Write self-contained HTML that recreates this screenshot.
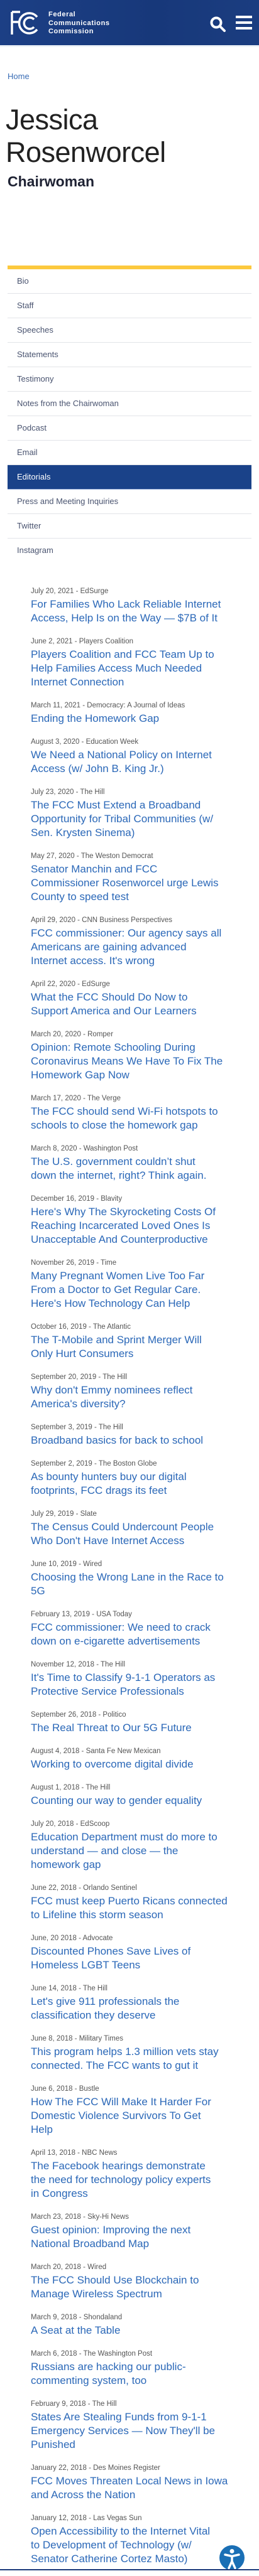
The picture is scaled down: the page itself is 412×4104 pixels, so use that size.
<!DOCTYPE html>
<html><head><meta charset="utf-8">
<style>
*{margin:0;padding:0;box-sizing:border-box}
body{width:412px;height:4095px;overflow:hidden;background:#fff;font-family:"Liberation Sans",Arial,sans-serif;position:relative}
.hdr{position:absolute;left:0;top:0;width:412px;height:72px;background:linear-gradient(90deg,#1c3f85,#17387a 60%,#1b3d80)}
.hl{position:absolute;left:0;top:72px;width:412px;height:3px;background:#eef3f8}
.org{position:absolute;left:77px;top:17px;color:#fff;font-size:11px;line-height:13.5px;font-weight:bold;letter-spacing:.6px}
.home{position:absolute;left:12px;top:114px;font-size:13px;color:#3a6db5}
.name{position:absolute;left:9px;top:165px;font-size:45px;line-height:52px;color:#222;font-weight:300;letter-spacing:-.5px}
.title{position:absolute;left:12px;top:276px;font-size:23px;font-weight:bold;color:#1e2233}
.ybar{position:absolute;left:12px;top:423px;width:388px;height:6px;background:#fcc93e}
.nav{position:absolute;left:12px;top:429px;width:388px}
.nav div{height:39px;line-height:38px;padding-left:15px;font-size:13px;color:#4a5470;border-bottom:1.5px solid #e2e4e8}
.nav div.act{background:#1a4289;color:#fff;border-bottom-color:#9fb4dd}
.nav div:last-child{border-bottom:none}
.list{position:absolute;left:49px;top:932px;width:350px}
.it{margin-bottom:16px}
.d{font-size:11.5px;line-height:20px;color:#555;white-space:nowrap}
.t{font-size:17px;line-height:22px;color:#2b68b8;white-space:nowrap}
.bl{position:absolute;left:0;top:4093px;width:412px;height:2px;background:#1a3a7a}
.acc{position:absolute;left:349px;top:4055px;width:40px;height:40px;border-radius:50%;background:#1a6fb5}
</style></head><body>
<div class="hdr">
<svg style="position:absolute;left:17px;top:17px" width="46" height="40" viewBox="0 0 46 40">
<path d="M2 2h13M2 2v36M2 18h10" stroke="#fff" stroke-width="3.5" fill="none"/>
<path d="M42 10A16 16 0 1 0 42 30" stroke="#fff" stroke-width="3.5" fill="none"/>
<path d="M37 14A9 9 0 1 0 37 26" stroke="#fff" stroke-width="3.5" fill="none"/>
</svg>
<div class="org">Federal<br>Communications<br>Commission</div>
<svg style="position:absolute;left:334px;top:26px" width="26" height="26" viewBox="0 0 26 26">
<circle cx="10" cy="10" r="7.5" stroke="#fff" stroke-width="4" fill="none"/>
<path d="M16 16l7 7" stroke="#fff" stroke-width="4" stroke-linecap="round"/>
</svg>
<svg style="position:absolute;left:375px;top:24px" width="26" height="24" viewBox="0 0 26 24">
<rect x="0" y="1" width="26" height="4" fill="#fff"/><rect x="0" y="10" width="26" height="4" fill="#fff"/><rect x="0" y="19" width="26" height="4" fill="#fff"/>
</svg>
</div>
<div class="hl"></div>
<div class="home">Home</div>
<div class="name">Jessica<br>Rosenworcel</div>
<div class="title">Chairwoman</div>
<div class="ybar"></div>
<div class="nav">
<div>Bio</div><div>Staff</div><div>Speeches</div><div>Statements</div><div>Testimony</div><div>Notes from the Chairwoman</div><div>Podcast</div><div>Email</div><div class="act">Editorials</div><div>Press and Meeting Inquiries</div><div>Twitter</div><div>Instagram</div>
</div>
<div class="list">
<div class="it"><div class="d">July 20, 2021 - EdSurge</div><div class="t">For Families Who Lack Reliable Internet<br>Access, Help Is on the Way — $7B of It</div></div>
<div class="it"><div class="d">June 2, 2021 - Players Coalition</div><div class="t">Players Coalition and FCC Team Up to<br>Help Families Access Much Needed<br>Internet Connection</div></div>
<div class="it"><div class="d">March 11, 2021 - Democracy: A Journal of Ideas</div><div class="t">Ending the Homework Gap</div></div>
<div class="it"><div class="d">August 3, 2020 - Education Week</div><div class="t">We Need a National Policy on Internet<br>Access (w/ John B. King Jr.)</div></div>
<div class="it"><div class="d">July 23, 2020 - The Hill</div><div class="t">The FCC Must Extend a Broadband<br>Opportunity for Tribal Communities (w/<br>Sen. Krysten Sinema)</div></div>
<div class="it"><div class="d">May 27, 2020 - The Weston Democrat</div><div class="t">Senator Manchin and FCC<br>Commissioner Rosenworcel urge Lewis<br>County to speed test</div></div>
<div class="it"><div class="d">April 29, 2020 - CNN Business Perspectives</div><div class="t">FCC commissioner: Our agency says all<br>Americans are gaining advanced<br>Internet access. It's wrong</div></div>
<div class="it"><div class="d">April 22, 2020 - EdSurge</div><div class="t">What the FCC Should Do Now to<br>Support America and Our Learners</div></div>
<div class="it"><div class="d">March 20, 2020 - Romper</div><div class="t">Opinion: Remote Schooling During<br>Coronavirus Means We Have To Fix The<br>Homework Gap Now</div></div>
<div class="it"><div class="d">March 17, 2020 - The Verge</div><div class="t">The FCC should send Wi-Fi hotspots to<br>schools to close the homework gap</div></div>
<div class="it"><div class="d">March 8, 2020 - Washington Post</div><div class="t">The U.S. government couldn’t shut<br>down the internet, right? Think again.</div></div>
<div class="it"><div class="d">December 16, 2019 - Blavity</div><div class="t">Here's Why The Skyrocketing Costs Of<br>Reaching Incarcerated Loved Ones Is<br>Unacceptable And Counterproductive</div></div>
<div class="it"><div class="d">November 26, 2019 - Time</div><div class="t">Many Pregnant Women Live Too Far<br>From a Doctor to Get Regular Care.<br>Here's How Technology Can Help</div></div>
<div class="it"><div class="d">October 16, 2019 - The Atlantic</div><div class="t">The T-Mobile and Sprint Merger Will<br>Only Hurt Consumers</div></div>
<div class="it"><div class="d">September 20, 2019 - The Hill</div><div class="t">Why don't Emmy nominees reflect<br>America's diversity?</div></div>
<div class="it"><div class="d">September 3, 2019 - The Hill</div><div class="t">Broadband basics for back to school</div></div>
<div class="it"><div class="d">September 2, 2019 - The Boston Globe</div><div class="t">As bounty hunters buy our digital<br>footprints, FCC drags its feet</div></div>
<div class="it"><div class="d">July 29, 2019 - Slate</div><div class="t">The Census Could Undercount People<br>Who Don't Have Internet Access</div></div>
<div class="it"><div class="d">June 10, 2019 - Wired</div><div class="t">Choosing the Wrong Lane in the Race to<br>5G</div></div>
<div class="it"><div class="d">February 13, 2019 - USA Today</div><div class="t">FCC commissioner: We need to crack<br>down on e-cigarette advertisements</div></div>
<div class="it"><div class="d">November 12, 2018 - The Hill</div><div class="t">It's Time to Classify 9-1-1 Operators as<br>Protective Service Professionals</div></div>
<div class="it"><div class="d">September 26, 2018 - Politico</div><div class="t">The Real Threat to Our 5G Future</div></div>
<div class="it"><div class="d">August 4, 2018 - Santa Fe New Mexican</div><div class="t">Working to overcome digital divide</div></div>
<div class="it"><div class="d">August 1, 2018 - The Hill</div><div class="t">Counting our way to gender equality</div></div>
<div class="it"><div class="d">July 20, 2018 - EdScoop</div><div class="t">Education Department must do more to<br>understand — and close — the<br>homework gap</div></div>
<div class="it"><div class="d">June 22, 2018 - Orlando Sentinel</div><div class="t">FCC must keep Puerto Ricans connected<br>to Lifeline this storm season</div></div>
<div class="it"><div class="d">June, 20 2018 - Advocate</div><div class="t">Discounted Phones Save Lives of<br>Homeless LGBT Teens</div></div>
<div class="it"><div class="d">June 14, 2018 - The Hill</div><div class="t">Let's give 911 professionals the<br>classification they deserve</div></div>
<div class="it"><div class="d">June 8, 2018 - Military Times</div><div class="t">This program helps 1.3 million vets stay<br>connected. The FCC wants to gut it</div></div>
<div class="it"><div class="d">June 6, 2018 - Bustle</div><div class="t">How The FCC Will Make It Harder For<br>Domestic Violence Survivors To Get<br>Help</div></div>
<div class="it"><div class="d">April 13, 2018 - NBC News</div><div class="t">The Facebook hearings demonstrate<br>the need for technology policy experts<br>in Congress</div></div>
<div class="it"><div class="d">March 23, 2018 - Sky-Hi News</div><div class="t">Guest opinion: Improving the next<br>National Broadband Map</div></div>
<div class="it"><div class="d">March 20, 2018 - Wired</div><div class="t">The FCC Should Use Blockchain to<br>Manage Wireless Spectrum</div></div>
<div class="it"><div class="d">March 9, 2018 - Shondaland</div><div class="t">A Seat at the Table</div></div>
<div class="it"><div class="d">March 6, 2018 - The Washington Post</div><div class="t">Russians are hacking our public-<br>commenting system, too</div></div>
<div class="it"><div class="d">February 9, 2018 - The Hill</div><div class="t">States Are Stealing Funds from 9-1-1<br>Emergency Services — Now They'll be<br>Punished</div></div>
<div class="it"><div class="d">January 22, 2018 - Des Moines Register</div><div class="t">FCC Moves Threaten Local News in Iowa<br>and Across the Nation</div></div>
<div class="it"><div class="d">January 12, 2018 - Las Vegas Sun</div><div class="t">Open Accessibility to the Internet Vital<br>to Development of Technology (w/<br>Senator Catherine Cortez Masto)</div></div>
</div>
<div class="acc">
<svg width="40" height="40" viewBox="0 0 40 40">
<circle cx="20" cy="9.5" r="3.5" fill="#fff"/>
<path d="M9 15l11 2.5 11-2.5M20 17.5v8M20 25.5l-5 11M20 25.5l5 11" stroke="#fff" stroke-width="3.5" fill="none" stroke-linecap="round" stroke-linejoin="round"/>
</svg>
</div>
<div class="bl"></div>
</body></html>
